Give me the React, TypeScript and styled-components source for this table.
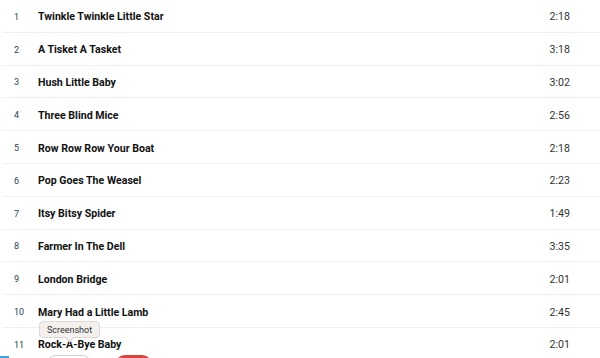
import React from "react";
import styled, { createGlobalStyle } from "styled-components";

const Global = createGlobalStyle`
  html, body { margin: 0; padding: 0; background: #fff; }
  body { width: 600px; height: 358px; overflow: hidden; font-family: Roboto, "Liberation Sans", sans-serif; }
`;

const Page = styled.div`
  position: relative;
  width: 600px;
  height: 358px;
  overflow: hidden;
`;

const List = styled.ol`
  list-style: none;
  margin: 0;
  padding: 0;
`;

const Row = styled.li`
  box-sizing: border-box;
  height: 32.8px;
  display: grid;
  grid-template-columns: 36px 1fr 60px;
  align-items: center;
  border-bottom: 1.5px solid #f0f0f0;
  border-bottom-left-radius: 2px;
  margin-left: 2px;
`;

const Num = styled.span`
  font-family: Roboto, sans-serif;
  font-size: 9px;
  color: #24424f;
  padding-left: 12px;
  padding-top: 2px;
`;

const Title = styled.span`
  font-family: Roboto, sans-serif;
  font-weight: 700;
  font-size: 10.6px;
  color: #111;
  padding-top: 2px;
`;

const Duration = styled.span`
  font-family: Roboto, sans-serif;
  font-size: 10.6px;
  color: #333;
  text-align: right;
  padding-right: 30px;
  padding-top: 2px;
`;

const Tooltip = styled.div`
  position: absolute;
  left: 39px;
  top: 321px;
  width: 61px;
  height: 17px;
  box-sizing: border-box;
  background: #f3f0ee;
  border: 1px solid #ddd8d4;
  border-radius: 4px;
  font-family: Roboto, sans-serif;
  font-size: 9px;
  color: #333;
  display: flex;
  align-items: center;
  justify-content: center;
  &::after {
    content: "";
    position: absolute;
    left: 26px;
    bottom: -4px;
    width: 6px;
    height: 6px;
    background: #f3f0ee;
    border-right: 1px solid #ddd8d4;
    border-bottom: 1px solid #ddd8d4;
    transform: rotate(45deg);
  }
`;

const Dock = styled.div`
  position: absolute;
  left: 0;
  top: 355px;
  display: flex;
  align-items: flex-start;
`;

const BlueBar = styled.div`
  margin-top: 1px;
  width: 9px;
  height: 2px;
  background: #3aa3e3;
`;

const Pill = styled.div<{ $variant: "grey" | "red" }>`
  margin-left: ${(p) => (p.$variant === "grey" ? "37px" : "23px")};
  width: ${(p) => (p.$variant === "grey" ? "46px" : "37px")};
  height: 20px;
  box-sizing: border-box;
  border-radius: 10px;
  border: ${(p) => (p.$variant === "grey" ? "1px solid #d0d0d0" : "none")};
  background: ${(p) => (p.$variant === "grey" ? "#fff" : "#d9443f")};
`;

const tracks: [string, string][] = [
  ["Twinkle Twinkle Little Star", "2:18"],
  ["A Tisket A Tasket", "3:18"],
  ["Hush Little Baby", "3:02"],
  ["Three Blind Mice", "2:56"],
  ["Row Row Row Your Boat", "2:18"],
  ["Pop Goes The Weasel", "2:23"],
  ["Itsy Bitsy Spider", "1:49"],
  ["Farmer In The Dell", "3:35"],
  ["London Bridge", "2:01"],
  ["Mary Had a Little Lamb", "2:45"],
  ["Rock-A-Bye Baby", "2:01"],
];

export default function App() {
  return (
    <Page>
      <Global />
      <List>
        {tracks.map(([t, d], i) => (
          <Row key={i}>
            <Num>{i + 1}</Num>
            <Title>{t}</Title>
            <Duration>{d}</Duration>
          </Row>
        ))}
      </List>
      <Tooltip>Screenshot</Tooltip>
      <Dock>
        <BlueBar />
        <Pill $variant="grey" />
        <Pill $variant="red" />
      </Dock>
    </Page>
  );
}
